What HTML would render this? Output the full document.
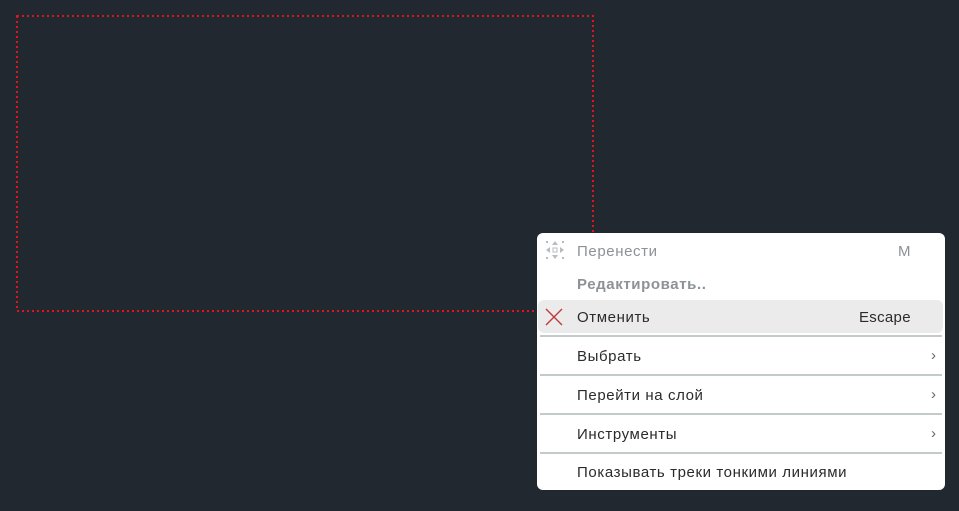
<!DOCTYPE html>
<html><head><meta charset="utf-8"><style>
html,body{margin:0;padding:0;width:959px;height:511px;background:#212830;overflow:hidden;font-family:"Liberation Sans","DejaVu Sans",sans-serif;}
.menu{position:absolute;left:537px;top:233px;width:408px;height:257px;background:#fff;border-radius:6px;}
.t{position:absolute;left:40px;font-size:15px;letter-spacing:0.6px;color:#2b2b2b;white-space:nowrap;line-height:18px;}
.sep{position:absolute;left:3px;width:402px;height:2px;background:#c3cbca;}
.chev{position:absolute;right:9px;font-size:15px;color:#666;}
</style></head><body>
<svg width="959" height="511" style="position:absolute;left:0;top:0">
<rect x="17" y="16" width="576" height="295" fill="none" stroke="#e0141e" stroke-width="2" stroke-dasharray="2 3"/>
</svg>
<div class="menu">
  <svg style="position:absolute;left:7px;top:6px" width="22" height="22" viewBox="0 0 22 22">
    <g fill="#b8bcbf">
      <polygon points="11,2 8,6 14,6"/><polygon points="11,20 8,16 14,16"/>
      <polygon points="2,11 6,8 6,14"/><polygon points="20,11 16,8 16,14"/>
      <rect x="9" y="9" width="4" height="4" fill="none" stroke="#b8bcbf"/>
      <rect x="2" y="2" width="2" height="2"/><rect x="18" y="2" width="2" height="2"/>
      <rect x="2" y="18" width="2" height="2"/><rect x="18" y="18" width="2" height="2"/>
    </g>
  </svg>
  <div class="t" style="top:10px;color:#8c9296">Перенести</div>
  <div class="t" style="top:10px;left:361px;color:#8c9296">M</div>
  <div class="t" style="top:43px;color:#8c9296;font-weight:bold">Редактировать..</div>
  <div style="position:absolute;left:1px;top:67px;width:405px;height:33px;background:#eaebea;border-radius:6px"></div>
  <svg style="position:absolute;left:8px;top:75px" width="18" height="18" viewBox="0 0 18 18"><path d="M1 1L17 17M17 1L1 17" stroke="#c0393b" stroke-width="1.4"/></svg>
  <div class="t" style="top:76px">Отменить</div>
  <div class="t" style="top:76px;left:322px;letter-spacing:0.3px">Escape</div>
  <div class="sep" style="top:102px"></div>
  <div class="t" style="top:115px">Выбрать</div><div class="chev" style="top:114px">›</div>
  <div class="sep" style="top:141px"></div>
  <div class="t" style="top:154px">Перейти на слой</div><div class="chev" style="top:153px">›</div>
  <div class="sep" style="top:180px"></div>
  <div class="t" style="top:193px">Инструменты</div><div class="chev" style="top:192px">›</div>
  <div class="sep" style="top:219px"></div>
  <div class="t" style="top:231px">Показывать треки тонкими линиями</div>
</div>
</body></html>
